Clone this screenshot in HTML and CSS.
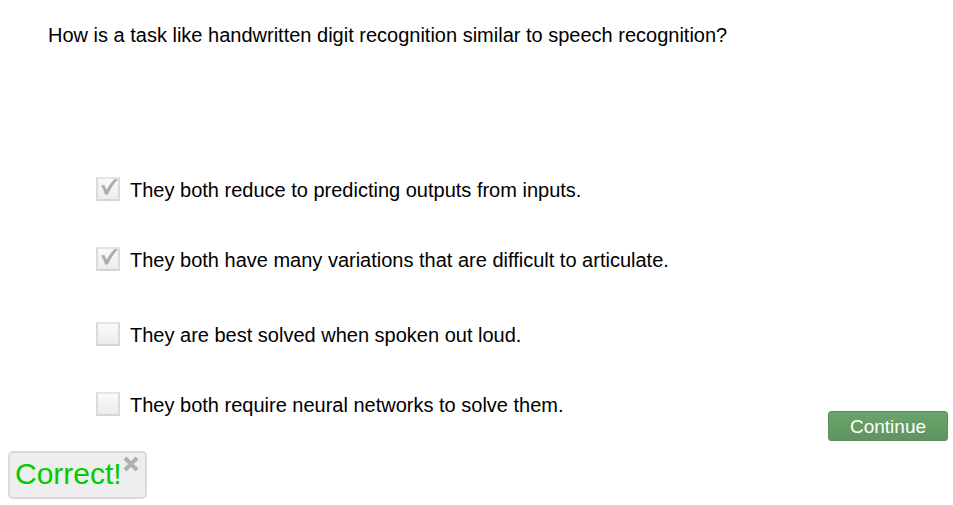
FILE: index.html
```html
<!DOCTYPE html>
<html lang="en">
<head>
<meta charset="utf-8">
<title>Quiz</title>
<link rel="stylesheet" href="styles.css">
</head>
<body>
<form class="quiz">
  <fieldset class="question">
    <legend class="prompt">How is a task like handwritten digit recognition similar to speech recognition?</legend>
    <div class="choices">
      <div class="group">
        <label class="choice"><span class="tick"><input class="box" type="checkbox" checked><svg class="mark" viewBox="0 0 24 24" aria-hidden="true"><path d="M5 8.5 8.2 8 10.6 12.8Q13.800 6.500 18.500 2L22 2.200Q15.500 9 12 17.500L9 17.500Q7.700 12.500 5 8.500Z"/></svg></span>They both reduce to predicting outputs from inputs.</label>
        <label class="choice"><span class="tick"><input class="box" type="checkbox" checked><svg class="mark" viewBox="0 0 24 24" aria-hidden="true"><path d="M5 8.5 8.2 8 10.6 12.8Q13.800 6.500 18.500 2L22 2.200Q15.500 9 12 17.500L9 17.500Q7.700 12.500 5 8.500Z"/></svg></span>They both have many variations that are difficult to articulate.</label>
      </div>
      <div class="group">
        <label class="choice"><span class="tick"><input class="box" type="checkbox"></span>They are best solved when spoken out loud.</label>
        <label class="choice"><span class="tick"><input class="box" type="checkbox"></span>They both require neural networks to solve them.</label>
      </div>
    </div>
  </fieldset>
  <div class="actions"><button class="continue" type="button">Continue</button></div>
  <div class="feedback" role="status">Correct!<button class="close" type="button" aria-label="Close"><svg class="cross" viewBox="0 0 16 16" aria-hidden="true"><path d="M2 2 14 14M14 2 2 14"/></svg></button></div>
</form>
</body>
</html>
```

FILE: styles.css
```css
body {
  margin: 0;
  background: #fff;
  color: #000;
  font: 20px/24px "Liberation Sans", Arial, sans-serif;
}

.quiz {
  display: flow-root;
}

.question {
  min-width: 0;
  margin: 0;
  padding: 23px 48px 0;
  border: 0;
}

.prompt {
  float: left;
  width: 100%;
  padding: 0;
}

.choices {
  clear: both;
  display: flex;
  flex-direction: column;
  gap: 49px;
  padding: 130px 48px 0;
}

.group {
  display: flex;
  flex-direction: column;
  gap: 44px;
}

.choice {
  display: flex;
  align-items: flex-start;
  gap: 10px;
  line-height: 26px;
}

.tick {
  position: relative;
  flex: none;
  width: 24px;
  height: 24px;
}

.box {
  appearance: none;
  display: block;
  box-sizing: border-box;
  width: 24px;
  height: 24px;
  margin: 0;
  border: 2px solid #dadada;
  border-top-color: #e4e4e4;
  border-bottom-color: #d4d4d4;
  background: linear-gradient(#fafafa, #ececec);
}

.mark {
  position: absolute;
  inset: 0;
  fill: #aeaeae;
  pointer-events: none;
}

.actions {
  display: flex;
  justify-content: flex-end;
  margin-top: -7px;
  padding-right: 5px;
}

.continue {
  width: 120px;
  height: 30px;
  padding: 2px 0 0;
  border: 1px solid #5b8e5b;
  border-radius: 3px;
  background: linear-gradient(#6aa56a, #619261);
  color: #fff;
  font: 19px/24px "Liberation Sans", Arial, sans-serif;
}

.feedback {
  box-sizing: border-box;
  display: flex;
  align-items: flex-start;
  gap: 1px;
  width: fit-content;
  margin: 10px 0 0 8px;
  padding: 3px 6px 5px 5px;
  border: 2px solid #dadada;
  border-radius: 5px;
  background: #eee;
  color: #0c0;
  font-size: 30px;
  line-height: 36px;
}

.close {
  width: 16px;
  height: 16px;
  padding: 0;
  border: 0;
  background: none;
}

.cross {
  display: block;
  width: 16px;
  height: 16px;
  fill: none;
  stroke: #b0b0b0;
  stroke-width: 4;
}
```
